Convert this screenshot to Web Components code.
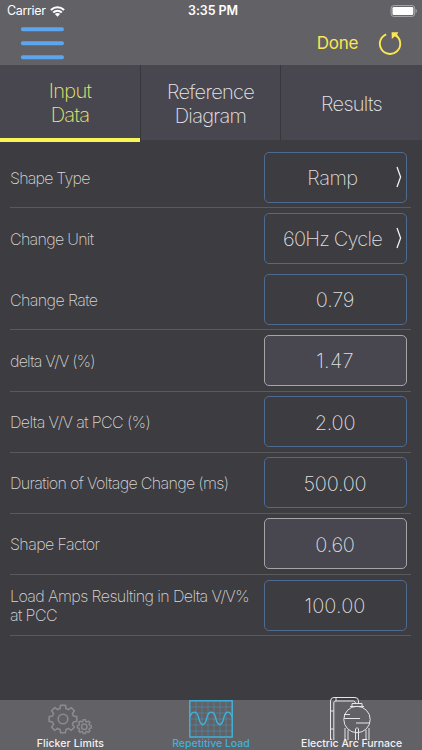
<!DOCTYPE html>
<html lang="en">
<head>
<meta charset="utf-8">
<meta name="viewport" content="width=device-width, initial-scale=1">
<title>Flicker</title>
<style>
    body {
        margin: 0;
        background: #3d3c40;
    }
</style>
</head>
<body>
<flicker-app></flicker-app>

<script>
customElements.define('status-bar',
    class extends HTMLElement {
        connectedCallback() {
            this.attachShadow({mode: 'open'}).innerHTML = `
    <style>
        :host {
            display: grid;
            grid-template-columns: 1fr auto 1fr;
            align-items: center;
            height: 22px;
            padding: 0 4px 0 7px;
            color: #fff;
            font: 400 12.5px/22px Inter, sans-serif;
        }

        .carrier {
            display: flex;
            align-items: center;
            gap: 4px;
            letter-spacing: -.35px;
        }

        .time {
            font-weight: 600;
            padding-left: 1px;
            letter-spacing: -.1px;
        }

        .battery {
            justify-self: end;
            display: block;
        }
    </style>
    <div class="carrier">
        <span>Carrier</span>
        <svg width="15" height="11" viewBox="0 0 15 11" fill="none" stroke="#fff" stroke-width="2.1">
            <path d="M.9 4C4.8.4 10.2.4 14.1 4M3.200 6.600C5.700 4.300 9.300 4.300 11.800 6.600"/>
            <path d="M4.900 8.100C6.400 6.700 8.600 6.700 10.100 8.100L7.500 10.800Z" fill="#fff" stroke="none"/>
        </svg>
    </div>
    <div class="time">3:35 PM</div>
    <svg class="battery" width="28" height="12" viewBox="0 0 28 12">
        <rect x="1.1" y=".6" width="23.6" height="10.8" rx="2.6" fill="none" stroke="#a9a9ac"/>
        <rect x="2.5" y="2" width="20.8" height="8" rx="1.2" fill="#fff"/>
        <path d="M25.700 4V8C27.200 7.500 27.200 4.500 25.700 4Z" fill="#a9a9ac"/>
    </svg>
`;
        }
    }
);

customElements.define('nav-bar',
    class extends HTMLElement {
        connectedCallback() {
            this.attachShadow({mode: 'open'}).innerHTML = `
    <style>
        :host {
            display: flex;
            align-items: center;
            height: 43px;
            padding: 0 20px 0 20px;
            color: #fbe753;
            font: 400 17px/43px Inter, sans-serif;
        }

        .menu {
            margin: 0 auto 2px 0;
        }

        .done {
            margin-right: 20px;
            letter-spacing: -.3px;
        }

        .reload {
            margin-bottom: 2px;
        }
    </style>
    <svg class="menu" width="44" height="34" viewBox="0 0 44 34" stroke="#5ca6f0" stroke-width="4" stroke-linecap="round">
        <path d="M2.800 3.200H42M2.800 17.200H42M2.800 31.200H42"/>
    </svg>
    <span class="done">Done</span>
    <svg class="reload" width="24" height="24" viewBox="0 0 24 24" fill="none" stroke="#fbe753" stroke-width="1.9">
        <path d="M8.200 3.300A10.200 10.200 0 1 0 18.700 5"/>
        <path d="M13.600 1.200H20.400L19 3.600L20 5L18.400 6.400L17 5.200L13.800 8Z" fill="#fbe753" stroke="none"/>
    </svg>
`;
        }
    }
);

customElements.define('top-tab',
    class extends HTMLElement {
        connectedCallback() {
            this.attachShadow({mode: 'open'}).innerHTML = `
    <style>
        :host {
            display: flex;
            align-items: center;
            justify-content: center;
            box-sizing: border-box;
            height: 75px;
            padding-top: 2px;
            background: #484750;
            border-right: 1px solid #38373c;
            color: #e6e6e8;
            text-align: center;
            font: 200 20px/24px Inter, sans-serif;
            letter-spacing: -.7px;
        }

        :host(:last-of-type) {
            border-right: 0;
        }

        :host([active]) {
            height: 77px;
            padding-top: 3px;
            border-right: 0;
            border-bottom: 4px solid #f8f557;
            color: #ecec6c;
        }
    </style>
    <span><slot></slot></span>
`;
        }
    }
);

customElements.define('value-box',
    class extends HTMLElement {
        connectedCallback() {
            this.attachShadow({mode: 'open'}).innerHTML = `
    <style>
        :host {
            display: grid;
            place-items: center;
            box-sizing: border-box;
            width: 143px;
            height: 51px;
            border: 1px solid #4d6b92;
            border-radius: 5px;
            color: #dededf;
            font: 200 20px/24px Inter, sans-serif;
            letter-spacing: var(--track, -.25px);
        }

        :host([readonly]) {
            background: #484750;
            border-color: #a5a5a8;
        }

        span, svg {
            grid-area: 1 / 1;
        }

        span {
            padding: 2px var(--shift, 0) 0 0;
        }

        svg {
            display: none;
            justify-self: end;
            margin-right: 4px;
        }

        :host([picker]) svg {
            display: block;
        }
    </style>
    <span><slot></slot></span>
    <svg width="6" height="22" viewBox="0 0 6 22" fill="none" stroke="#efeff0" stroke-width="1.3">
        <path d="M1 1L4.600 11L1 21"/>
    </svg>
`;
        }
    }
);

customElements.define('form-row',
    class extends HTMLElement {
        connectedCallback() {
            this.attachShadow({mode: 'open'}).innerHTML = `
    <style>
        :host {
            display: flex;
            align-items: center;
            justify-content: space-between;
            box-sizing: border-box;
            height: 61.15px;
            margin: 0 11px 0 10px;
            padding-right: 4.5px;
            border-bottom: 1px solid #5a595c;
        }

        :host([plain]) {
            border-bottom-color: transparent;
        }

        .label {
            width: 250px;
            padding-top: 2px;
            color: #d6d6d8;
            font: 200 16px/19px Inter, sans-serif;
            letter-spacing: var(--label-track, -.6px);
            white-space: pre-line;
        }
    </style>
    <div class="label">${this.getAttribute('label')}</div>
    <slot></slot>
`;
        }
    }
);

customElements.define('bottom-tab',
    class extends HTMLElement {
        connectedCallback() {
            this.attachShadow({mode: 'open'}).innerHTML = `
    <style>
        :host {
            display: flex;
            flex-direction: column;
            align-items: center;
            justify-content: flex-end;
            height: 51px;
            color: #f2f2f3;
            font: 500 10.5px/14px Inter, sans-serif;
            letter-spacing: var(--track, .1px);
            white-space: nowrap;
        }

        :host([active]) {
            color: #41b1da;
        }

        ::slotted(svg) {
            display: block;
            overflow: visible;
            margin: 0 var(--icon-right, 0) var(--icon-bottom, 1px) 0;
        }
    </style>
    <slot name="icon"></slot>
    <span><slot></slot></span>
`;
        }
    }
);

customElements.define('flicker-app',
    class extends HTMLElement {
        connectedCallback() {
            this.attachShadow({mode: 'open'}).innerHTML = `
    <style>
        :host {
            display: flex;
            flex-direction: column;
            height: 750px;
            overflow: hidden;
            background: #3d3c40;
        }

        header {
            height: 65px;
            background: #626166;
        }

        .tabs {
            display: grid;
            grid-template-columns: 140px 141px 1fr;
            align-items: start;
            height: 75px;
            background: #38373c;
        }

        .tabs top-tab:nth-child(2) {
            margin-left: 1px;
        }

        main {
            flex: 1;
            padding-top: 7px;
        }

        footer {
            display: grid;
            grid-template-columns: repeat(3, 1fr);
            height: 50px;
            background: #626166;
        }
    </style>
    <header>
        <status-bar></status-bar>
        <nav-bar></nav-bar>
    </header>
    <div class="tabs">
        <top-tab active>Input<br>Data</top-tab>
        <top-tab>Reference<br>Diagram</top-tab>
        <top-tab>Results</top-tab>
    </div>
    <main>
        <form-row label="Shape Type" style="--label-track: -.8px"><value-box picker style="--track: -.5px; --shift: 5px">Ramp</value-box></form-row>
        <form-row label="Change Unit" plain style="--label-track: -.7px"><value-box picker style="--track: -.8px; --shift: 5px">60Hz Cycle</value-box></form-row>
        <form-row label="Change Rate"><value-box>0.79</value-box></form-row>
        <form-row label="delta V/V (%)" style="--label-track: -.8px"><value-box readonly style="--track: .3px">1.47</value-box></form-row>
        <form-row label="Delta V/V at PCC (%)"><value-box>2.00</value-box></form-row>
        <form-row label="Duration of Voltage Change (ms)" style="--label-track: -.67px"><value-box>500.00</value-box></form-row>
        <form-row label="Shape Factor"><value-box readonly>0.60</value-box></form-row>
        <form-row label="Load Amps Resulting in Delta V/V%&#10;at PCC"><value-box style="--track: .1px">100.00</value-box></form-row>
    </main>
    <footer>
        <bottom-tab>
            <svg slot="icon" width="44" height="32" viewBox="0 0 44 32" fill="none" stroke="#8b8b8f" stroke-width="1.6" stroke-linejoin="round">
                <path d="M12.600 1.200H17.400L18 4.600L20.300 5.600L23.200 3.600L26.400 6.800L24.400 9.700L25.400 12L28.800 12.600V17.400L25.400 18L24.400 20.300L26.400 23.200L23.200 26.400L20.300 24.400L18 25.400L17.400 28.800H12.600L12 25.400L9.700 24.400L6.800 26.400L3.600 23.200L5.600 20.300L4.600 18L1.200 17.400V12.600L4.600 12L5.600 9.700L3.600 6.800L6.800 3.600L9.700 5.600L12 4.600Z"/>
                <circle cx="15" cy="15" r="4.800"/>
                <g transform="translate(28.800 15.200) scale(.5)" stroke-width="3">
                    <path d="M12.600 1.200H17.400L18 4.600L20.300 5.600L23.200 3.600L26.400 6.800L24.400 9.700L25.400 12L28.800 12.600V17.400L25.400 18L24.400 20.300L26.400 23.200L23.200 26.400L20.300 24.400L18 25.400L17.400 28.800H12.600L12 25.400L9.700 24.400L6.800 26.400L3.600 23.200L5.600 20.300L4.600 18L1.200 17.400V12.600L4.600 12L5.600 9.700L3.600 6.800L6.800 3.600L9.700 5.600L12 4.600Z"/>
                    <circle cx="15" cy="15" r="5.500"/>
                </g>
            </svg>
            Flicker Limits
        </bottom-tab>
        <bottom-tab active style="--track: 0; --icon-bottom: -1px">
            <svg slot="icon" width="44" height="38" viewBox="0 0 44 38" fill="none" stroke="#41b1da">
                <path d="M7 1V37M13 1V37M19 1V37M25 1V37M31 1V37M37 1V37M1 7H43M1 13H43M1 19H43M1 25H43M1 31H43" stroke-width=".8" opacity=".45"/>
                <rect x=".8" y=".8" width="42.400" height="36.200" stroke-width="1.500"/>
                <path d="M1 17C3 10.500 7.500 10.500 9.500 17C11.500 27 16 27 18 17C20 10.500 24.500 10.500 26.500 17C28.500 27 33 27 35 17C37 10.500 41 10.500 43 17" stroke-width="1.400"/>
            </svg>
            Repetitive Load
        </bottom-tab>
        <bottom-tab style="--track: -.02px; --icon-right: 4px">
            <svg slot="icon" width="42" height="39" viewBox="0 0 42 39" fill="none" stroke="#e6e6e8">
                <path d="M1.500 43V4Q1.500 .5 5 .5H26Q29.500 .5 29.500 4V6.500M4.800 43V6Q4.800 4 7 4H24.500Q26.500 4 26.500 6.500M1.500 14H4.800M1.500 32H4.800M7 .5V4"/>
                <path d="M23 6.500H33V9.500H23ZM21 9.500H35"/>
                <circle cx="28" cy="22.500" r="13.200"/>
                <path d="M15 17.500H21M15 21.500H31M27 26H41"/>
                <path d="M16 31V43M19 33V43M37 33V43M40 31V43M26.500 43V32Q28 29 29.500 32V43"/>
            </svg>
            Electric Arc Furnace
        </bottom-tab>
    </footer>
`;
        }
    }
);
</script>
</body>
</html>
